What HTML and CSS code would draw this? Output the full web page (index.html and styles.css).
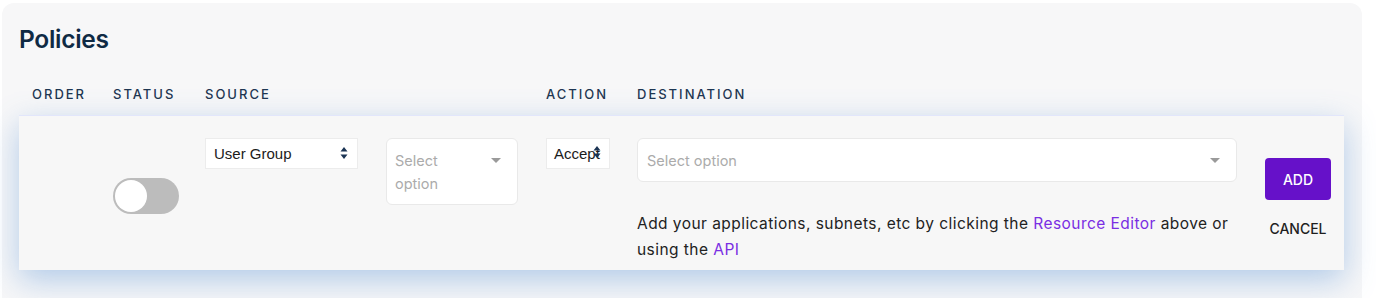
FILE: index.html
```html
<!DOCTYPE html>
<html>
<head>
<meta charset="utf-8">
<link rel="stylesheet" href="styles.css">
</head>
<body>
<div class="panel">
  <h1 class="title">Policies</h1>
  <div class="grid head">
    <div>ORDER</div>
    <div>STATUS</div>
    <div class="span2">SOURCE</div>
    <div>ACTION</div>
    <div>DESTINATION</div>
    <div></div>
  </div>
  <div class="grid row">
    <div class="order"></div>
    <div class="status"><span class="toggle"><span class="knob"></span></span></div>
    <div><div class="native src">User Group<svg class="updown" viewBox="0 0 8 12" width="8" height="12"><path d="M4 0L7.5 4.5H0.5Z M4 12L7.5 7.5H0.5Z" fill="#1b3454"/></svg></div></div>
    <div><div class="dd dd-small"><span class="ph">Select option</span><span class="caret"></span></div></div>
    <div><div class="native act"><span>Accept</span><svg class="updown ud2" viewBox="0 0 8 12" width="8" height="12"><path d="M4 0L7.5 4.5H0.5Z M4 12L7.5 7.5H0.5Z" fill="#1b3454"/></svg></div></div>
    <div class="dest">
      <div class="dd dd-wide"><span class="ph">Select option</span><span class="caret"></span></div>
      <p class="help">Add your applications, subnets, etc by clicking the <a>Resource Editor</a> above or using the <a>API</a></p>
    </div>
    <div class="btns">
      <button class="add">ADD</button>
      <span class="cancel">CANCEL</span>
    </div>
  </div>
</div>
</body>
</html>
```
FILE: styles.css
```css
html, body { margin: 0; padding: 0; background: #fff; }
body { font-family: Inter, "Noto Sans", sans-serif; color: #222; overflow: hidden; height: 298px; }
.panel {
  margin: 3px 0 0 2px;
  width: 1360px;
  height: 320px;
  box-sizing: border-box;
  background: #f7f7f8;
  border-radius: 12px 12px 0 0;
  padding: 21px 18px 0 17px;
}
.title {
  margin: 0;
  font-size: 24.5px;
  font-weight: 600;
  color: #0f2a44;
  letter-spacing: -0.3px;
  line-height: 30px;
}
.grid {
  display: grid;
  grid-template-columns: 81px 92px 181px 160px 91px 628px 66px;
  padding-left: 13px;
}
.head {
  margin-top: 31px;
  height: 30px;
  font-size: 13px;
  font-weight: 500;
  letter-spacing: 2px;
  color: #1e3652;
  line-height: 18px;
}
.head .span2 { grid-column: span 2; }
.row {
  height: 155px;
  box-sizing: border-box;
  padding-top: 22px;
  background: #f7f7f7;
  border-top: 1px solid #e2e6fb;
  box-shadow: 0 10px 30px rgba(80, 140, 210, 0.42);
}
.status { padding-top: 40px; }
.toggle {
  display: block;
  width: 66px;
  height: 36px;
  border-radius: 18px;
  background: #bcbcbc;
  box-sizing: border-box;
  padding: 2px;
}
.knob {
  display: block;
  width: 32px;
  height: 32px;
  border-radius: 50%;
  background: #fff;
}
.native {
  height: 31px;
  box-sizing: border-box;
  background: #fff;
  border: 1px solid #ececec;
  display: flex;
  align-items: center;
  font-family: "Liberation Sans", Arial, sans-serif;
  font-size: 15px;
  color: #1b1b1b;
  position: relative;
}
.src { width: 153px; padding-left: 8px; }
.src .updown { position: absolute; right: 9px; top: 8px; }
.act { width: 64px; padding-left: 7px; white-space: nowrap; }
.act .ud2 { position: absolute; left: 46px; top: 7px; }
.dd {
  background: #fff;
  border: 1px solid #e9e9e9;
  border-radius: 6px;
  box-sizing: border-box;
  position: relative;
  font-size: 14.5px;
  color: #ababab;
}
.dd-small { width: 132px; height: 67px; padding: 10px 40px 0 8px; line-height: 23px; }
.dd-wide { width: 600px; height: 44px; padding: 0 0 0 9px; line-height: 44px; }
.caret {
  position: absolute;
  width: 0; height: 0;
  border-left: 5.5px solid transparent;
  border-right: 5.5px solid transparent;
  border-top: 5px solid #9a9a9a;
}
.dd-small .caret { left: 104px; top: 19px; }
.dd-wide .caret { right: 16px; top: 19px; }
.help {
  margin: 0;
  padding-top: 29px;
  font-size: 15.5px;
  letter-spacing: 0.45px;
  line-height: 26px;
  color: #222;
  width: 600px;
}
.help a { color: #7a2ee3; }
.btns {
  display: flex;
  flex-direction: column;
  align-items: center;
  padding-top: 20px;
}
.add {
  width: 66px;
  height: 42px;
  border: 0;
  border-radius: 4px;
  background: #6611c9;
  color: #fff;
  font-family: Inter, sans-serif;
  font-size: 14px;
  font-weight: 500;
  padding: 0;
}
.cancel {
  margin-top: 20px;
  font-size: 14px;
  font-weight: 500;
  color: #1f1f1f;
  line-height: 18px;
}
```
